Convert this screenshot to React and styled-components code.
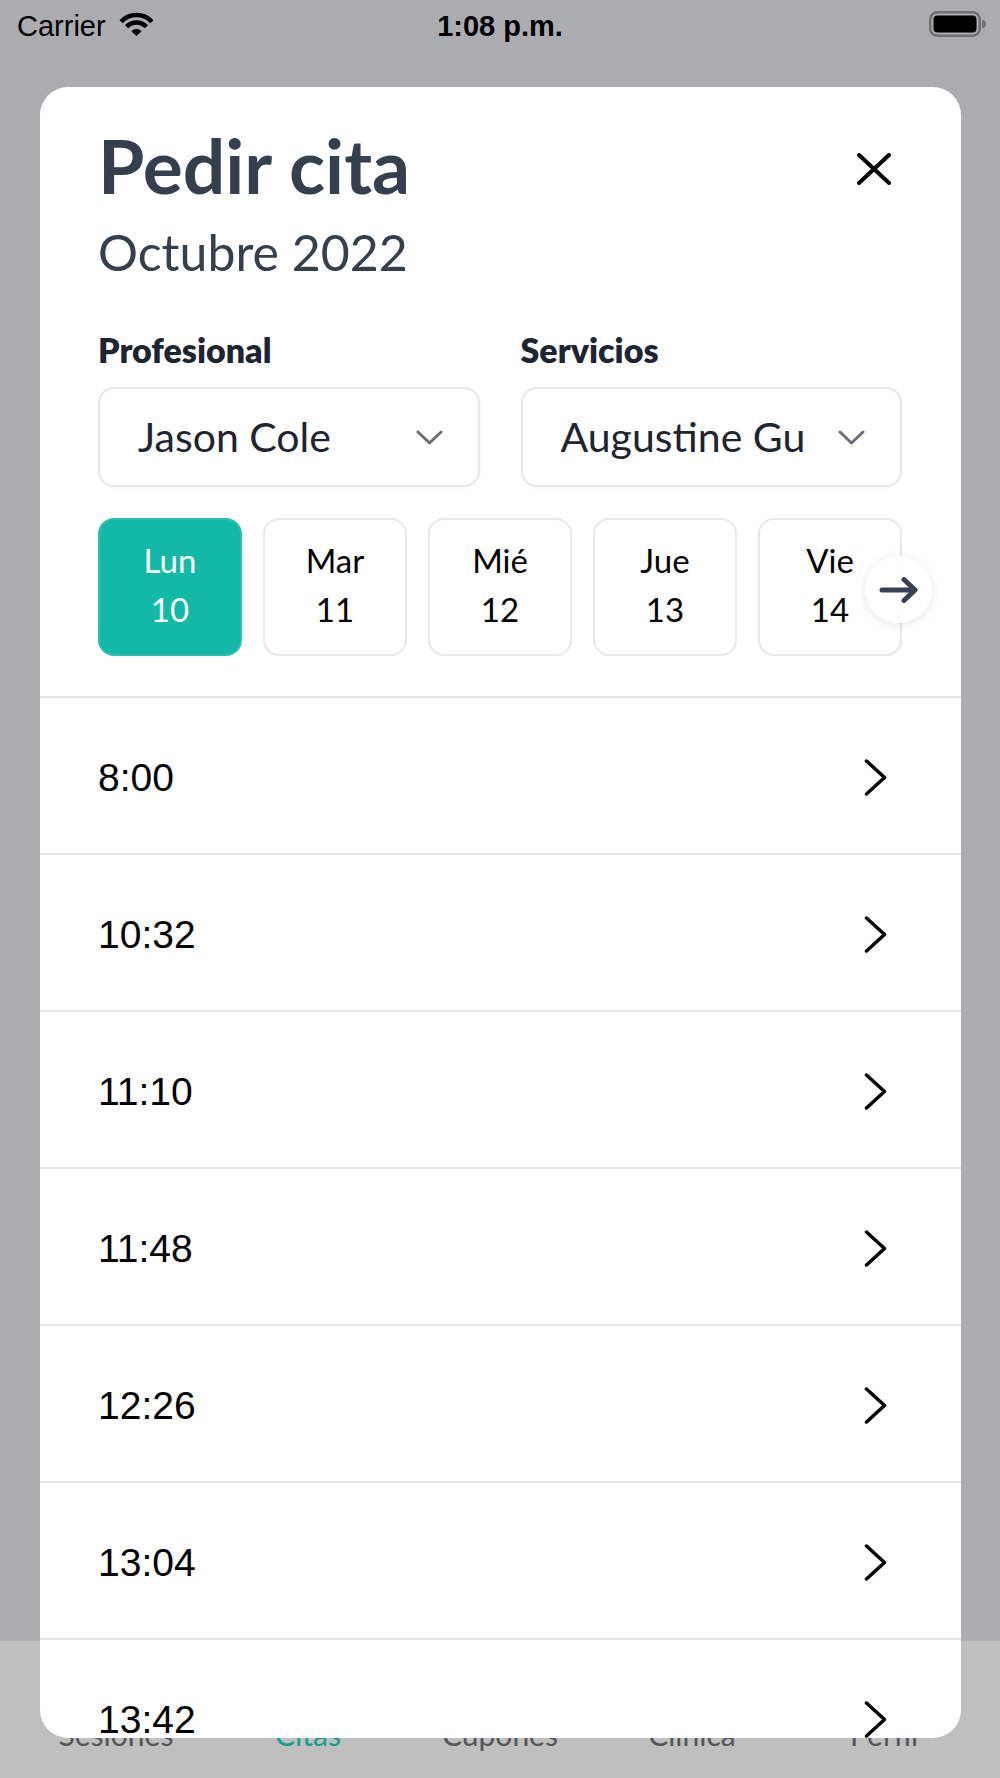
import React from "react";
import styled, { createGlobalStyle } from "styled-components";

const GlobalStyle = createGlobalStyle`
  html, body { margin: 0; padding: 0; }
  body {
    width: 1000px;
    height: 1778px;
    overflow: hidden;
    font-family: Lato, "Noto Sans", sans-serif;
    -webkit-font-smoothing: antialiased;
  }
  * { box-sizing: border-box; }
`;

const Screen = styled.div`
  position: relative;
  width: 1000px;
  height: 1778px;
  overflow: hidden;
  background: #abacb0;
  display: flex;
  flex-direction: column;
`;

const StatusBar = styled.div`
  height: 52px;
  padding: 9px 13px 0 17px;
  display: grid;
  grid-template-columns: 1fr auto 1fr;
  align-items: start;
  font-family: "Liberation Sans", Arial, sans-serif;
  font-size: 29px;
  line-height: 34px;
  color: #000;
`;

const StatusLeft = styled.div`
  display: flex;
  align-items: flex-start;
  gap: 12px;
`;

const StatusIcon = styled.svg`
  margin-top: 2px;
  display: block;
`;

const StatusTime = styled.div`
  font-weight: 700;
  text-align: center;
  padding-right: 4px;
`;

const StatusRight = styled.div`
  display: flex;
  justify-content: flex-end;
`;

const Backdrop = styled.div`
  flex: 1;
`;

const TabBar = styled.div`
  height: 138px;
  background: #bfbfbf;
  border-top: 1px solid #b3b3b5;
  padding: 0 20px;
  display: grid;
  grid-template-columns: repeat(5, 1fr);
`;

const Tab = styled.div`
  padding-top: 75px;
  text-align: center;
  font-size: 30px;
  line-height: 36px;
  color: ${(p) => (p.$active ? "#0f9f8b" : "#55565c")};
`;

const Sheet = styled.div`
  position: absolute;
  top: 87px;
  left: 40px;
  width: 921px;
  bottom: 40px;
  background: #fff;
  border-radius: 28px;
  overflow: hidden;
  display: flex;
  flex-direction: column;
`;

const Header = styled.div`
  padding: 33px 59px 0 58px;
`;

const TitleRow = styled.div`
  display: flex;
  justify-content: space-between;
  align-items: flex-start;
`;

const Title = styled.h1`
  margin: 0;
  font-weight: 700;
  font-size: 75px;
  line-height: 90px;
  color: #363f4e;
`;

const CloseButton = styled.button`
  width: 48px;
  height: 48px;
  margin: 25px 4px 0 0;
  padding: 0;
  border: none;
  background: none;
  display: flex;
  align-items: center;
  justify-content: center;
`;

const Subtitle = styled.div`
  margin-top: 11px;
  font-size: 50px;
  line-height: 62px;
  color: #363f4e;
`;

const Fields = styled.div`
  margin-top: 46px;
  display: grid;
  grid-template-columns: 1fr 1fr;
  column-gap: 41px;
`;

const Field = styled.div`
  display: flex;
  flex-direction: column;
  min-width: 0;
`;

const FieldLabel = styled.div`
  font-weight: 800;
  font-size: 34px;
  line-height: 42px;
  color: #1e2532;
`;

const Select = styled.div`
  margin-top: 16px;
  height: 100px;
  border: 2px solid #e6e7eb;
  border-radius: 16px;
  box-shadow: 0 1px 3px rgba(0, 0, 0, 0.04);
  padding: 0 35px 0 38px;
  display: flex;
  align-items: center;
  justify-content: space-between;
  gap: 20px;
`;

const SelectText = styled.span`
  font-size: 41px;
  line-height: 50px;
  color: #1f2430;
  white-space: nowrap;
  overflow: hidden;
`;

const DayRow = styled.div`
  position: relative;
  margin-top: 31px;
  display: grid;
  grid-template-columns: repeat(5, 1fr);
  column-gap: 21px;
`;

const DayChip = styled.div`
  height: 138px;
  border: 2px solid ${(p) => (p.$active ? "#2cbfae" : "#e6e7eb")};
  border-radius: 16px;
  background: ${(p) => (p.$active ? "#13b9a7" : "#fff")};
  color: ${(p) => (p.$active ? "#fff" : "#000")};
  display: flex;
  flex-direction: column;
  align-items: center;
  justify-content: center;
  padding-bottom: 4px;
  font-size: 33px;
  line-height: 49px;
`;

const NextButton = styled.div`
  position: absolute;
  top: 38px;
  right: -30px;
  width: 67px;
  height: 67px;
  border-radius: 50%;
  background: rgba(255, 255, 255, 0.92);
  box-shadow: 0 2px 10px rgba(0, 0, 0, 0.1);
  display: flex;
  align-items: center;
  justify-content: center;
`;

const SlotList = styled.div`
  margin-top: 40px;
  display: flex;
  flex-direction: column;
`;

const SlotRow = styled.div`
  flex-shrink: 0;
  height: 157px;
  border-top: 2px solid #e5e5ea;
  padding: 4px 74px 0 58px;
  display: flex;
  align-items: center;
  justify-content: space-between;
`;

const SlotTime = styled.span`
  font-family: "Liberation Sans", Arial, sans-serif;
  font-size: 39px;
  color: #000;
`;

const Wifi = () => (
  <StatusIcon width="37" height="26" viewBox="0 0 37 26">
    <path d="M3.14 10.68 A21 21 0 0 1 33.86 10.68" fill="none" stroke="#000" strokeWidth="4.5" />
    <path d="M8.63 15.79 A13.5 13.5 0 0 1 28.37 15.79" fill="none" stroke="#000" strokeWidth="4.5" />
    <path d="M18.5 25 L13.38 20.23 A7 7 0 0 1 23.62 20.23 Z" fill="#000" />
  </StatusIcon>
);

const Battery = () => (
  <StatusIcon width="58" height="26" viewBox="0 0 58 26">
    <rect x="1.25" y="1.25" width="49.5" height="23.5" rx="7" fill="none" stroke="#6f7074" strokeWidth="2.5" />
    <rect x="4.5" y="4.5" width="43" height="17" rx="4" fill="#000" />
    <path d="M53 9 Q57 9 57 13 Q57 17 53 17 Z" fill="#6f7074" />
  </StatusIcon>
);

const CloseIcon = () => (
  <svg width="34" height="32" viewBox="0 0 34 32">
    <path d="M2 2 L32 30 M32 2 L2 30" stroke="#000" strokeWidth="4" strokeLinecap="round" />
  </svg>
);

const ChevronDown = () => (
  <svg width="27" height="15" viewBox="0 0 27 15" style={{ flexShrink: 0 }}>
    <polyline points="2,2 13.5,13 25,2" fill="none" stroke="#6b6f78" strokeWidth="3" strokeLinecap="round" strokeLinejoin="round" />
  </svg>
);

const ChevronRight = () => (
  <svg width="23" height="37" viewBox="0 0 23 37">
    <polyline points="2.5,2 20.5,18.5 2.5,35" fill="none" stroke="#000" strokeWidth="3.5" strokeLinecap="round" strokeLinejoin="round" />
  </svg>
);

const ArrowRight = () => (
  <svg width="40" height="26" viewBox="0 0 40 26">
    <path d="M3 13 H36 M25 2.5 L36 13 L25 23.5" fill="none" stroke="#374151" strokeWidth="5" strokeLinecap="round" strokeLinejoin="round" />
  </svg>
);

const days = [
  { name: "Lun", num: 10, active: true },
  { name: "Mar", num: 11 },
  { name: "Mié", num: 12 },
  { name: "Jue", num: 13 },
  { name: "Vie", num: 14 },
];

const slots = ["8:00", "10:32", "11:10", "11:48", "12:26", "13:04", "13:42"];

const tabs = ["Sesiones", "Citas", "Cupones", "Clínica", "Perfil"];

export default function App() {
  return (
    <>
      <GlobalStyle />
      <Screen>
        <StatusBar>
          <StatusLeft>
            <span>Carrier</span>
            <Wifi />
          </StatusLeft>
          <StatusTime>1:08 p.m.</StatusTime>
          <StatusRight>
            <Battery />
          </StatusRight>
        </StatusBar>
        <Backdrop />
        <TabBar>
          {tabs.map((t) => (
            <Tab key={t} $active={t === "Citas"}>
              {t}
            </Tab>
          ))}
        </TabBar>

        <Sheet>
          <Header>
            <TitleRow>
              <Title>Pedir cita</Title>
              <CloseButton aria-label="Cerrar">
                <CloseIcon />
              </CloseButton>
            </TitleRow>
            <Subtitle>Octubre 2022</Subtitle>
            <Fields>
              <Field>
                <FieldLabel>Profesional</FieldLabel>
                <Select>
                  <SelectText>Jason Cole</SelectText>
                  <ChevronDown />
                </Select>
              </Field>
              <Field>
                <FieldLabel>Servicios</FieldLabel>
                <Select>
                  <SelectText>Augustine Gu</SelectText>
                  <ChevronDown />
                </Select>
              </Field>
            </Fields>
            <DayRow>
              {days.map((d) => (
                <DayChip key={d.num} $active={d.active}>
                  <span>{d.name}</span>
                  <span>{d.num}</span>
                </DayChip>
              ))}
              <NextButton>
                <ArrowRight />
              </NextButton>
            </DayRow>
          </Header>
          <SlotList>
            {slots.map((s) => (
              <SlotRow key={s}>
                <SlotTime>{s}</SlotTime>
                <ChevronRight />
              </SlotRow>
            ))}
          </SlotList>
        </Sheet>
      </Screen>
    </>
  );
}
